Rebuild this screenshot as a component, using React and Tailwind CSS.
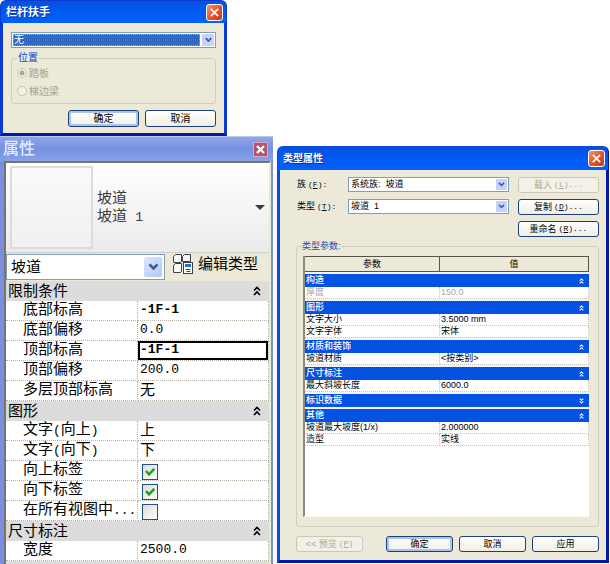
import React from "react";

const CJK = "font-['Liberation_Sans','Noto_Sans_CJK_SC',sans-serif]";

function Chevron({ className = "" }) {
  return (
    <svg viewBox="0 0 9 7" className={className} fill="none" stroke="#3f5a8c" strokeWidth="2.2" aria-hidden="true">
      <path d="M1 1.2 L4.5 4.8 L8 1.2" />
    </svg>
  );
}

function Fold({ down = false, className = "" }) {
  return (
    <svg viewBox="0 0 8 10" className={className} fill="none" stroke="currentColor" strokeWidth="1.7" aria-hidden="true">
      {down ? <path d="M1 1 L4 4 L7 1 M1 5.5 L4 8.5 L7 5.5" /> : <path d="M1 4.5 L4 1.5 L7 4.5 M1 9 L4 6 L7 9" />}
    </svg>
  );
}

function CloseButton({ className = "" }) {
  return (
    <button
      type="button"
      aria-label="关闭"
      className={`flex h-[17px] w-[17px] items-center justify-center rounded-[3px] border border-white bg-linear-to-br from-[#f09478] via-[#e2562f] to-[#c23a12] ${className}`}
    >
      <svg viewBox="0 0 9 9" className="h-[9px] w-[9px]" stroke="#fff" strokeWidth="1.8" aria-hidden="true">
        <path d="M0.8 0.8 L8.2 8.2 M8.2 0.8 L0.8 8.2" />
      </svg>
    </button>
  );
}

function TitleBar({ children, className = "" }) {
  return (
    <header
      className={`flex items-center justify-between rounded-t-[5px] bg-linear-to-b from-[#0a4fd8] via-[#0058ee] via-30% to-[#0060fa] pr-[3px] pl-[5px] font-bold text-white ${className}`}
    >
      <h2 className="[text-shadow:1px_1px_0_#0a2f8c]">{children}</h2>
      <CloseButton />
    </header>
  );
}

function Button({ children, className = "", primary = false, disabled = false }) {
  const look = disabled
    ? "border-[#c9c7ba] bg-[#f3f1e7] text-[#a8a698]"
    : primary
      ? "border-[#1c3f78] bg-linear-to-b from-white to-[#f0efe8] text-black shadow-[inset_0_0_0_2px_#a9c4f0]"
      : "border-[#1c3f78] bg-linear-to-b from-white to-[#efeee6] text-black";
  return (
    <button
      type="button"
      disabled={disabled}
      className={`flex items-center justify-center rounded-[3px] border leading-3 whitespace-nowrap ${look} ${className}`}
    >
      {children}
    </button>
  );
}

function Key({ children, tail }) {
  return (
    <span className="ml-[2px] font-['Liberation_Mono',monospace] text-[8px]">
      (<u>{children}</u>){tail}
    </span>
  );
}

function RailingDialog() {
  return (
    <section className="mr-[46px] flex h-[136px] flex-col rounded-t-[6px] border-x-[3px] border-t border-b-[3px] border-[#0a3ad2] border-b-[#001c9c] bg-[#ece9d8] text-[10px]">
      <TitleBar className="-mx-[2px] h-[22px] shrink-0 text-[11px]">栏杆扶手</TitleBar>
      <div className="flex flex-1 flex-col px-2 pt-[9px]">
        <div className="flex h-4 border border-[#7f9db9] bg-white p-px">
          <select
            aria-label="扶手类型"
            className="min-w-0 flex-1 appearance-none border border-dotted border-[#e0a54a] bg-[#316ac5] leading-[10px] text-white"
          >
            <option>无</option>
          </select>
          <span className="ml-[2px] flex w-3 items-center justify-center rounded-[1px] bg-[#c3d3fb]">
            <Chevron className="h-[6px] w-[7px]" />
          </span>
        </div>
        <fieldset className="mt-[3px] h-[53px] rounded-[3px] border border-[#d0cfbc] px-[5px]" disabled>
          <legend className="px-px leading-[14px] text-[#0046d5]">位置</legend>
          <div className="flex flex-col gap-1 pt-px text-[#a5a392]">
            <label className="flex h-[14px] items-center gap-[2px]">
              <input
                type="radio"
                name="pos"
                defaultChecked
                className="h-[10px] w-[10px] appearance-none rounded-full border border-[#c6c4b4] bg-[#f3f1e7] bg-[radial-gradient(circle,#a9a797_2px,transparent_3px)]"
              />
              踏板
            </label>
            <label className="flex h-[14px] items-center gap-[2px]">
              <input
                type="radio"
                name="pos"
                className="h-[10px] w-[10px] appearance-none rounded-full border border-[#c6c4b4] bg-[#f3f1e7]"
              />
              梯边梁
            </label>
          </div>
        </fieldset>
        <div className="mt-[6px] flex justify-end gap-[6px]">
          <Button primary className="h-[17px] w-[71px]">确定</Button>
          <Button className="h-[17px] w-[71px]">取消</Button>
        </div>
      </div>
    </section>
  );
}

const instanceGroups = [
  {
    name: "限制条件",
    rows: [
      ["底部标高", "-1F-1"],
      ["底部偏移", "0.0"],
      ["顶部标高", "-1F-1", "active"],
      ["顶部偏移", "200.0"],
      ["多层顶部标高", "无"],
    ],
  },
  {
    name: "图形",
    rows: [
      ["文字(向上)", "上"],
      ["文字(向下)", "下"],
      ["向上标签", true],
      ["向下标签", true],
      ["在所有视图中...", false],
    ],
  },
  { name: "尺寸标注", rows: [["宽度", "2500.0"]] },
];

function Mixed({ text }) {
  return text.split(/([\x21-\x7e]+)/).map((part, i) =>
    i % 2 ? (
      <span key={i} className="font-['Liberation_Mono',monospace] text-[13px]">
        {part}
      </span>
    ) : (
      part
    ),
  );
}

function Check({ label, checked }) {
  return (
    <label className="grid h-4 w-4">
      <input
        type="checkbox"
        aria-label={label}
        defaultChecked={checked}
        className="col-start-1 row-start-1 h-4 w-4 appearance-none border border-[#1f5488] bg-linear-to-br from-[#dddcd6] to-white"
      />
      {checked && (
        <svg viewBox="0 0 16 16" className="pointer-events-none col-start-1 row-start-1 h-4 w-4" fill="none" stroke="#21a121" strokeWidth="2.6" aria-hidden="true">
          <path d="M4 7 L7 10.3 L12.3 4.8" />
        </svg>
      )}
    </label>
  );
}

function EditTypeIcon() {
  return (
    <svg viewBox="0 0 21 21" className="h-[21px] w-[21px]" fill="none" stroke="#3c4248" strokeWidth="1" aria-hidden="true">
      <path d="M1.5 3.5 L3.5 1.5 H9.5 V8 L8.5 9.5 H1.5 Z" fill="#f7f8fa" />
      <path d="M10.5 3.5 L12.5 1.5 H18.5 V8.5 H10.5 Z" fill="#f7f8fa" />
      <path d="M1.5 12.5 L3.5 10.5 H9.5 V18 L8.5 19.5 H1.5 Z" fill="#f7f8fa" />
      <rect x="11.5" y="9.5" width="9" height="11" fill="#fff" />
      <rect x="13" y="11" width="6" height="3" fill="#1b75c4" stroke="none" />
      <path d="M13.5 16.5 H18.5 M14.5 18.5 H18.5" stroke="#2a4c78" />
    </svg>
  );
}

function PropertiesPalette() {
  return (
    <section className="flex flex-1 flex-col border-t border-[#b9c6ee] bg-[#7b8ee0] text-[15px] text-black">
      <header className="flex h-6 items-center justify-between bg-linear-to-b from-[#8fa6ea] via-[#7590e0] to-[#86a2e6] pr-[5px] pl-[3px] text-[#e3edff]">
        <h2 className="text-[16px] leading-5 font-medium">属性</h2>
        <button type="button" aria-label="关闭" className="flex h-[15px] w-[15px] items-center justify-center border border-[#d9a9c0] bg-[#b8526a]">
          <svg viewBox="0 0 9 9" className="h-[9px] w-[9px]" stroke="#fff" strokeWidth="2.4" aria-hidden="true">
            <path d="M1 1 L8 8 M8 1 L1 8" />
          </svg>
        </button>
      </header>
      <div className="mr-[2px] ml-1 flex-1 border-t-2 border-r-2 border-l-2 border-[#77756a] border-r-[#ece9d8] bg-[#ece9d8]">
        <div className="flex h-[90px] items-center border-b border-[#cfcfcf] bg-linear-to-b from-white to-[#ebebeb] pr-1 pl-1">
          <div className="h-[83px] w-[83px] border-2 border-[#dcdcdc] bg-linear-to-b from-[#fafafa] to-[#f0f0f0]" />
          <div className="ml-1 flex-1 leading-[18px] text-[#3c3c3c]">
            <p>坡道</p>
            <p className="whitespace-pre">
              <Mixed text="坡道  1" />
            </p>
          </div>
          <svg viewBox="0 0 10 5" className="h-[5px] w-[10px]" aria-hidden="true">
            <path d="M0 0 H10 L5 5 Z" fill="#3c3c3c" />
          </svg>
        </div>
        <div className="flex h-7 items-start">
          <div className="mt-px flex h-[26px] w-[159px] border border-[#7f9db9] bg-white p-[2px]">
            <select aria-label="类别" className="min-w-0 flex-1 appearance-none pl-[2px] leading-5">
              <option>坡道</option>
            </select>
            <span className="flex w-[18px] items-center justify-center rounded-[2px] bg-linear-to-br from-[#dbe5fd] to-[#b4c8f6]">
              <Chevron className="h-[8px] w-[11px]" />
            </span>
          </div>
          <button type="button" className="ml-[7px] flex items-center gap-[5px] leading-[21px]">
            <EditTypeIcon />
            编辑类型
          </button>
        </div>
        <table className="w-full table-fixed border-separate border-spacing-0 bg-white">
          <colgroup>
            <col className="w-[132px]" />
            <col />
          </colgroup>
          {instanceGroups.map((g) => (
            <tbody key={g.name}>
              <tr>
                <th colSpan={2} className="h-5 bg-[#dcdcdc] p-0 text-left font-normal">
                  <div className="flex items-center justify-between pr-2 pl-[2px] leading-5">
                    {g.name}
                    <Fold className="h-[10px] w-2" />
                  </div>
                </th>
              </tr>
              {g.rows.map(([name, value, state]) => (
                <tr key={name}>
                  <td className="h-5 border-r border-b border-dotted border-[#b5b2a4] p-0 pl-[17px] align-top leading-4 whitespace-nowrap">
                    <Mixed text={name} />
                  </td>
                  <td className="h-5 border-r border-b border-dotted border-[#b5b2a4] p-0 align-top leading-4">
                    {typeof value === "boolean" ? (
                      <div className="flex h-[19px] items-end pl-1">
                        <Check label={name} checked={value} />
                      </div>
                    ) : (
                      <div
                        className={`h-[19px] ${state ? "border-2 border-black leading-[13px]" : "pt-px pl-[2px]"} ${
                          /^[-\d]/.test(value) ? "font-['Liberation_Mono',monospace] text-[13px]" : ""
                        } ${value === "-1F-1" ? "font-bold" : ""}`}
                      >
                        {value}
                      </div>
                    )}
                  </td>
                </tr>
              ))}
            </tbody>
          ))}
        </table>
        <div className="h-1 bg-[#dcdcdc]" />
      </div>
    </section>
  );
}

const typeGroups = [
  { name: "构造", rows: [["厚度", "150.0", "off"]] },
  { name: "图形", rows: [["文字大小", "3.5000 mm"], ["文字字体", "宋体"]] },
  { name: "材质和装饰", rows: [["坡道材质", "<按类别>"]] },
  { name: "尺寸标注", rows: [["最大斜坡长度", "6000.0"]] },
  { name: "标识数据", rows: [] },
  { name: "其他", rows: [["坡道最大坡度(1/x)", "2.000000"], ["造型", "实线"]] },
];

function SmallSelect({ id, children }) {
  return (
    <div className="mr-[9px] flex h-[15px] flex-1 border border-[#7f9db9] bg-white p-px">
      <select id={id} className="min-w-0 flex-1 appearance-none pl-px leading-[11px] whitespace-pre">
        <option>{children}</option>
      </select>
      <span className="flex w-[11px] items-center justify-center bg-[#c3d3fb]">
        <Chevron className="h-[5px] w-[7px]" />
      </span>
    </div>
  );
}

function TypeDialog() {
  return (
    <section className="mt-[146px] mr-px flex h-[417px] min-w-0 flex-1 flex-col rounded-t-[6px] border-x-[3px] border-t border-b-[3px] border-[#0a4ae0] border-r-[#0018a8] border-b-[#0018a8] bg-[#ece9d8] text-[9px]">
      <TitleBar className="-mx-[2px] h-[23px] shrink-0 text-[10px]">类型属性</TitleBar>
      <div className="flex flex-1 flex-col px-[7px] pt-[7px] pl-4">
        <div className="flex h-[22px] items-start">
          <label htmlFor="family" className="w-[52px] pl-px leading-[14px]">
            族<Key tail=":">F</Key>
          </label>
          <SmallSelect id="family">系统族:{"\u00a0\u00a0"}坡道</SmallSelect>
          <Button disabled className="h-4 w-[81px]">载入<Key tail="...">L</Key></Button>
        </div>
        <div className="flex h-[22px] items-start">
          <label htmlFor="type" className="w-[52px] pl-px leading-[14px]">
            类型<Key tail=":">T</Key>
          </label>
          <SmallSelect id="type">坡道{"\u00a0\u00a0"}1</SmallSelect>
          <Button className="h-4 w-[81px]">复制<Key tail="...">D</Key></Button>
        </div>
        <div className="flex justify-end">
          <Button className="h-4 w-[81px]">重命名<Key tail="...">R</Key></Button>
        </div>
        <fieldset className="mt-[2px] h-[288px] rounded-[3px] border border-[#d0cfbc] pr-[9px] pl-[5px]">
          <legend className="leading-[14px] text-[#1c50a8]">类型参数:</legend>
          <div className="mt-[3px] ml-px h-[261px] border-b border-l-2 border-[#f8f7f0] border-l-[#8c8a80] bg-white">
            <table className="w-full table-fixed border-separate border-spacing-0">
              <colgroup>
                <col className="w-[135px]" />
                <col />
              </colgroup>
              <thead>
                <tr>
                  <th className="h-4 border border-l-0 border-[#55534a] bg-[#ece9d8] p-0 leading-3 font-normal">参数</th>
                  <th className="h-4 border border-l-0 border-[#55534a] bg-[#ece9d8] p-0 leading-3 font-normal">值</th>
                </tr>
              </thead>
              {typeGroups.map((g) => (
                <tbody key={g.name}>
                  <tr>
                    <th colSpan={2} className="h-[15px] border-t-2 border-[#f4f3ec] bg-[#0452e2] p-0 text-left font-medium text-white">
                      <div className="flex items-center justify-between pr-[5px] pl-px leading-[13px]">
                        {g.name}
                        <Fold down={g.rows.length === 0} className="h-[6px] w-[5px]" />
                      </div>
                    </th>
                  </tr>
                  {g.rows.map(([name, value, off]) => (
                    <tr key={name} className={off ? "text-[#a8a8a8]" : "text-black"}>
                      <td className="h-3 border-r border-b border-dotted border-[#c4c4c4] p-0 pl-px leading-[11px] whitespace-nowrap">{name}</td>
                      <td className="h-3 border-r border-b border-dotted border-[#c4c4c4] p-0 pl-px leading-[11px] whitespace-nowrap">{value}</td>
                    </tr>
                  ))}
                </tbody>
              ))}
            </table>
          </div>
        </fieldset>
        <div className="mt-[9px] flex gap-[6px]">
          <Button disabled className="h-4 w-[67px]">&lt;&lt; 预览<Key>P</Key></Button>
          <span className="flex-1" />
          <Button primary className="h-4 w-[67px]">确定</Button>
          <Button className="h-4 w-[67px]">取消</Button>
          <Button className="h-4 w-[67px]">应用</Button>
        </div>
      </div>
    </section>
  );
}

export default function App() {
  return (
    <main className={`flex min-h-screen items-stretch gap-1 bg-white text-black ${CJK}`}>
      <div className="flex w-[273px] shrink-0 flex-col">
        <RailingDialog />
        <PropertiesPalette />
      </div>
      <TypeDialog />
    </main>
  );
}
